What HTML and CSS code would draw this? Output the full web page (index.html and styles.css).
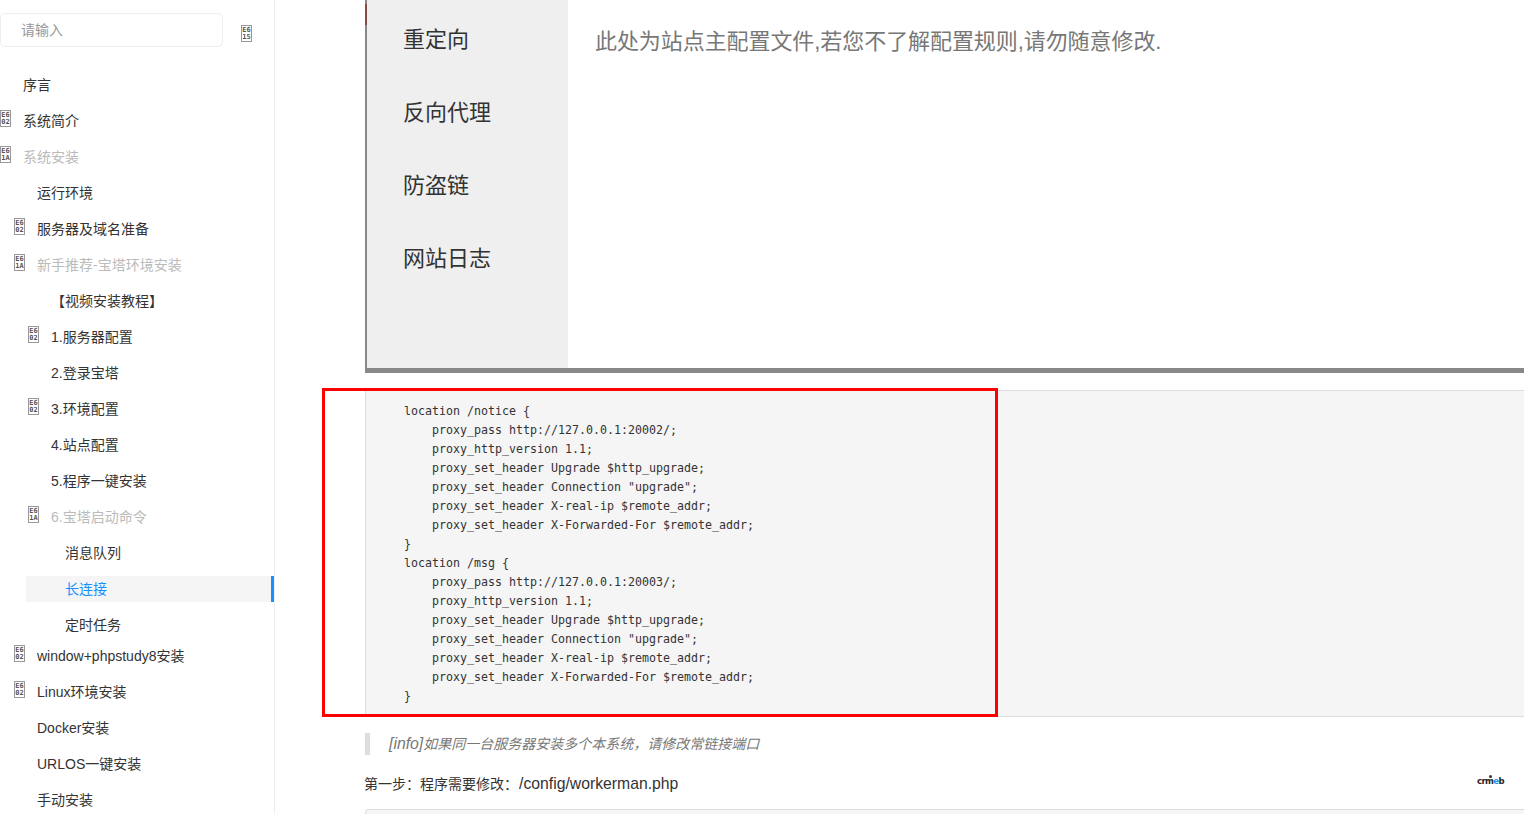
FILE: index.html
```html
<!DOCTYPE html>
<html lang="zh">
<head>
<meta charset="utf-8">
<title>长连接</title>
<link rel="stylesheet" href="styles.css">
</head>
<body>
<div class="page">
  <aside class="sidebar">
    <div class="search">
      <div class="search-input">请输入</div>
      <span class="tofu tofu-search">E6<br>15</span>
    </div>
    <ul class="tree">
      <li class="row lv0">序言</li>
      <li class="row lv0"><span class="tofu">E6<br>02</span>系统简介</li>
      <li class="row lv0 muted"><span class="tofu">E6<br>1A</span>系统安装</li>
      <li class="row lv1">运行环境</li>
      <li class="row lv1"><span class="tofu">E6<br>02</span>服务器及域名准备</li>
      <li class="row lv1 muted"><span class="tofu">E6<br>1A</span>新手推荐-宝塔环境安装</li>
      <li class="row lv2">【视频安装教程】</li>
      <li class="row lv2"><span class="tofu">E6<br>02</span>1.服务器配置</li>
      <li class="row lv2">2.登录宝塔</li>
      <li class="row lv2"><span class="tofu">E6<br>02</span>3.环境配置</li>
      <li class="row lv2">4.站点配置</li>
      <li class="row lv2">5.程序一键安装</li>
      <li class="row lv2 muted"><span class="tofu">E6<br>1A</span>6.宝塔启动命令</li>
      <li class="row lv3">消息队列</li>
      <li class="row lv3 active">长连接</li>
      <li class="row lv3 last">定时任务</li>
      <li class="row lv1"><span class="tofu">E6<br>02</span>window+phpstudy8安装</li>
      <li class="row lv1"><span class="tofu">E6<br>02</span>Linux环境安装</li>
      <li class="row lv1">Docker安装</li>
      <li class="row lv1">URLOS一键安装</li>
      <li class="row lv1">手动安装</li>
    </ul>
  </aside>
  <main class="content">
    <figure class="shot">
      <ul class="shot-menu">
        <li>重定向</li>
        <li>反向代理</li>
        <li>防盗链</li>
        <li>网站日志</li>
      </ul>
      <p class="shot-note">此处为站点主配置文件,若您不了解配置规则,请勿随意修改.</p>
    </figure>
    <pre class="code">location /notice {
    proxy_pass http://127.0.0.1:20002/;
    proxy_http_version 1.1;
    proxy_set_header Upgrade $http_upgrade;
    proxy_set_header Connection "upgrade";
    proxy_set_header X-real-ip $remote_addr;
    proxy_set_header X-Forwarded-For $remote_addr;
}
location /msg {
    proxy_pass http://127.0.0.1:20003/;
    proxy_http_version 1.1;
    proxy_set_header Upgrade $http_upgrade;
    proxy_set_header Connection "upgrade";
    proxy_set_header X-real-ip $remote_addr;
    proxy_set_header X-Forwarded-For $remote_addr;
}</pre>
    <blockquote class="note"><span class="note-tag">[info]</span>如果同一台服务器安装多个本系统&#xFF0C;请修改常链接端口</blockquote>
    <div class="step">
      <p>第一步&#xFF1A;程序需要修改&#xFF1A;<span class="path">/config/workerman.php</span></p>
      <div class="logo"><span class="logo-m">crm</span><b>e</b><span>b</span></div>
    </div>
    <div class="code-next"></div>
  </main>
  <div class="highlight"></div>
</div>
</body>
</html>
```
FILE: styles.css
```css
* { box-sizing: border-box; }
html, body { margin: 0; padding: 0; height: 814px; overflow: hidden; background: #fff; }
body { font-family: "Liberation Sans", "Noto Sans CJK SC", sans-serif; font-size: 14px; color: #333; }
ul { list-style: none; margin: 0; padding: 0; }
.page { position: relative; display: flex; height: 814px; overflow: hidden; }

.sidebar { flex: 0 0 275px; border-right: 1px solid #eee; height: 814px; overflow: hidden; }
.search { display: flex; align-items: flex-start; height: 67px; padding-top: 13px; }
.search-input { width: 223px; height: 34px; border: 1px solid #eee; border-radius: 5px; padding-left: 20px; line-height: 32px; color: #999; }
.tofu { display: block; width: 11px; height: 17px; border: 1px solid #999; background: #fff; color: #555; font: 700 7px/7px "DejaVu Sans Mono", monospace; text-align: center; padding-top: 1px; overflow: hidden; }
.tofu-search { margin: 12px 0 0 18px; }

.row { position: relative; display: flex; align-items: center; height: 36px; padding-bottom: 2px; white-space: nowrap; }
.row .tofu { position: absolute; top: 7px; }
.lv0 { padding-left: 23px; }
.lv0 .tofu { left: 0; }
.lv1 { padding-left: 37px; }
.lv1 .tofu { left: 14px; }
.lv2 { padding-left: 51px; }
.lv2 .tofu { left: 28px; }
.lv3 { padding-left: 65px; }
.muted { color: #bbb; }
.last { margin-bottom: -5px; }
.active { height: 26px; margin: 5px 0 5px 26px; padding-left: 39px; background: #f5f5f5; color: #1890ff; border-right: 3px solid #1890ff; }

.content { flex: 1 1 auto; min-width: 0; margin-left: 90px; margin-right: -10px; }
.shot { position: relative; display: flex; height: 373px; margin: 0; border-left: 2px solid #888; border-bottom: 5px solid #888; }
.shot::before { content: ""; position: absolute; left: -2px; top: 4px; width: 2px; height: 21px; background: #8a4a4a; }
.shot-menu { flex: 0 0 201px; background: #efefef; padding: 3px 0 0 36px; color: #333; font-size: 22px; }
.shot-menu li { height: 73px; line-height: 73px; }
.shot-note { margin: 0; padding: 26px 0 0 27px; font-size: 22px; line-height: 32px; color: #777; white-space: nowrap; letter-spacing: -0.07px; }

.code { height: 327px; margin: 17px 0 0; padding: 11px 38px 0; background: #f5f5f5; border: 1px solid #ddd; font: 11.63px/19px "DejaVu Sans Mono", monospace; color: #333; overflow: hidden; }
.note { height: 22px; margin: 16px 0 0; padding-left: 19px; border-left: 5px solid #ddd; font-style: italic; line-height: 22px; color: #777; white-space: nowrap; }
.note-tag { font-size: 15.8px; }
.step { display: flex; justify-content: space-between; align-items: center; height: 22px; margin-top: 17px; padding-right: 30px; }
.step p { margin: -1px 0 0 -1px; white-space: nowrap; }
.path { margin-left: 1px; font-size: 15.75px; }
.logo { display: flex; align-items: baseline; margin-top: -4px; font: 700 8.5px/12px "DejaVu Sans", sans-serif; color: #222; letter-spacing: -0.6px; }
.logo b { color: #1890ff; }
.logo-m { position: relative; }
.logo-m::after { content: ""; position: absolute; right: 1px; top: 0; width: 3px; height: 3px; border-radius: 50%; background: #333; }
.code-next { height: 40px; margin-top: 15px; background: #f5f5f5; border: 1px solid #ddd; border-radius: 3px; }

.highlight { position: absolute; left: 322px; top: 388px; width: 676px; height: 329px; border: 3px solid #f00; pointer-events: none; }
```
